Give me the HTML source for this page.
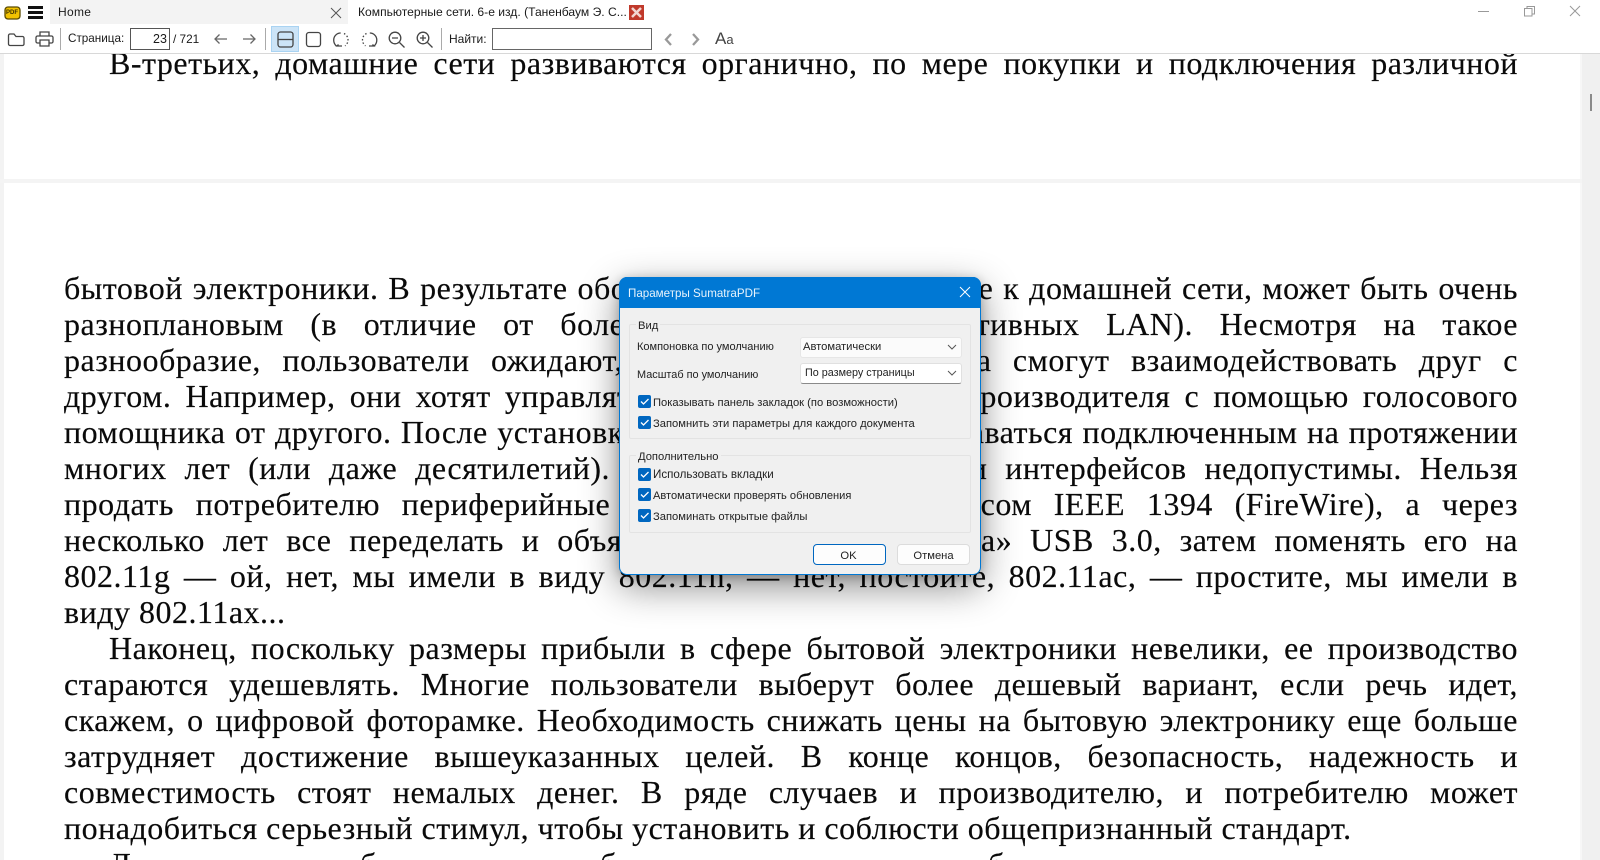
<!DOCTYPE html>
<html lang="ru"><head><meta charset="utf-8"><title>SumatraPDF</title>
<style>
html,body{margin:0;padding:0;width:1600px;height:860px;overflow:hidden;background:#fff}
body{position:relative;font-family:"Liberation Sans",sans-serif;color:#111}
.a{position:absolute;white-space:nowrap}
.bg{position:absolute}
.l{position:absolute;left:64px;width:1454px;height:36px;line-height:36px;font-family:"Liberation Serif",serif;font-size:32px;letter-spacing:.5px;color:#0a0a0a;text-align:justify;text-align-last:justify;white-space:nowrap;-webkit-text-stroke:.15px #0a0a0a}
.i{left:109px;width:1409px}
.e{text-align-last:left;text-align:left}
.t{font-size:12px;line-height:16px;color:#1a1a1a}
.d{font-size:11.2px;line-height:14px;color:#222}
.cb{position:absolute;width:13px;height:13px;background:#0067c0;border-radius:2px}
.cb svg{display:block}
</style></head><body>
<div class="bg" style="left:0;top:0;width:4px;height:860px;background:#f3f3f3"></div>
<div class="bg" style="left:1582px;top:0;width:18px;height:860px;background:#f0f0f0"></div>
<div class="bg" style="left:1580px;top:0;width:2px;height:860px;background:#f7f7f7"></div>
<div class="bg" style="left:0;top:179px;width:1582px;height:4px;background:#f4f4f4"></div>
<div class="bg" style="left:1590px;top:94px;width:2px;height:17px;background:#8a8a8a"></div>

<div class="l" style="top:45px;left:109px;width:1409px">В-третьих, домашние сети развиваются органично, по мере покупки и подключения различной</div>
<div class="l" style="top:270px">бытовой электроники. В результате оборудование, подключаемое к домашней сети, может быть очень</div>
<div class="l" style="top:306px">разноплановым (в отличие от более однородных корпоративных LAN). Несмотря на такое</div>
<div class="l" style="top:342px">разнообразие, пользователи ожидают, что все их устройства смогут взаимодействовать друг с</div>
<div class="l" style="top:378px">другом. Например, они хотят управлять устройством одного производителя с помощью голосового</div>
<div class="l" style="top:414px">помощника от другого. После установки устройств должны оставаться подключенным на протяжении</div>
<div class="l" style="top:450px">многих лет (или даже десятилетий). Частые смены версий и интерфейсов недопустимы. Нельзя</div>
<div class="l" style="top:486px">продать потребителю периферийные устройства с интерфейсом IEEE 1394 (FireWire), а через</div>
<div class="l" style="top:522px">несколько лет все переделать и объявить «стандартом месяца» USB 3.0, затем поменять его на</div>
<div class="l" style="top:558px">802.11g — ой, нет, мы имели в виду 802.11n, — нет, постойте, 802.11ac, — простите, мы имели в</div>
<div class="l e" style="top:594px">виду 802.11ax...</div>
<div class="l i" style="top:630px">Наконец, поскольку размеры прибыли в сфере бытовой электроники невелики, ее производство</div>
<div class="l" style="top:666px">стараются удешевлять. Многие пользователи выберут более дешевый вариант, если речь идет,</div>
<div class="l" style="top:702px">скажем, о цифровой фоторамке. Необходимость снижать цены на бытовую электронику еще больше</div>
<div class="l" style="top:738px">затрудняет достижение вышеуказанных целей. В конце концов, безопасность, надежность и</div>
<div class="l" style="top:774px">совместимость стоят немалых денег. В ряде случаев и производителю, и потребителю может</div>
<div class="l e" style="top:810px">понадобиться серьезный стимул, чтобы установить и соблюсти общепризнанный стандарт.</div>
<div class="l e" style="top:846px;left:109px">Д</div>
<div class="l e" style="top:846px;left:360px">б</div>
<div class="l e" style="top:846px;left:600px">б</div>
<div class="l e" style="top:846px;left:988px">б</div>

<!-- chrome -->
<div class="bg" style="left:0;top:0;width:1600px;height:53px;background:#fff;border-bottom:1px solid #d8d8d8"></div>
<div class="bg" style="left:50px;top:0;width:298px;height:24px;background:#f3f3f3"></div>
<svg class="a" style="left:0;top:0" width="1600" height="53" viewBox="0 0 1600 53" fill="none" stroke="#444" stroke-width="1.3">
  <rect x="5" y="7" width="15" height="12" rx="3" fill="#f2c200" stroke="#5a4a00"/>
  <g fill="#111" stroke="none"><rect x="28" y="6" width="15" height="3"/><rect x="28" y="11" width="15" height="3"/><rect x="28" y="16" width="15" height="3"/></g>
  <path d="M331 8l10 10M341 8l-10 10" stroke="#555" stroke-width="1"/>
  <path d="M8.500 35.500a1.500 1.500 0 0 1 1.500-1.500h4l2 2.500h6.500a1.500 1.500 0 0 1 1.500 1.500v6a1.500 1.500 0 0 1-1.500 1.500h-12.500a1.500 1.500 0 0 1-1.500-1.500z"/>
  <path d="M40 36v-4h9v4M40 43h-2.500a1.500 1.500 0 0 1-1.500-1.500v-4a1.500 1.500 0 0 1 1.500-1.500h14a1.500 1.500 0 0 1 1.500 1.500v4a1.500 1.500 0 0 1-1.500 1.500h-2.500M40 40h9v6h-9z"/>
  <path d="M60.500 28v22M265.500 28v22M441.500 28v22" stroke="#aaa" stroke-width="1"/>
  <path d="M227 39h-12M219.500 34.500l-4.500 4.500 4.500 4.500M243 39h12M250.500 34.500l4.500 4.500-4.500 4.500" stroke="#666"/>
  <rect x="271.500" y="26.500" width="27" height="25" fill="#cce4f7" stroke="#a9d3f2" stroke-width="1"/>
  <rect x="278" y="32" width="15" height="15" rx="2.500"/><path d="M278 39.500h15"/>
  <rect x="306.500" y="32.500" width="14" height="14" rx="2.500"/>
  <g transform="translate(2 0)">
  <path d="M340 46h-5l1.500-1.500M334.500 46c-2-1.500-2.800-3.500-2.800-6a7 7 0 0 1 7-7"/>
  <path d="M342 33.500a7 7 0 0 1 4 6.500 7 7 0 0 1-3 5.800" stroke-dasharray="1.500 2"/>
  </g>
  <g transform="translate(-2 0)">
  <path d="M371 46h5l-1.500-1.500M376 46c2-1.500 2.800-3.500 2.800-6a7 7 0 0 0-7-7"/>
  <path d="M368.500 33.500a7 7 0 0 0-4 6.500 7 7 0 0 0 3 5.800" stroke-dasharray="1.500 2"/>
  </g>
  <circle cx="395" cy="38" r="5.800"/><path d="M392 38h6M399.500 42.500l5 5"/>
  <circle cx="423" cy="38" r="5.800"/><path d="M420 38h6M423 35v6M427.500 42.500l5 5"/>
  <path d="M671 34l-5 5.500 5 5.500" stroke="#999" stroke-width="2.300"/>
  <path d="M693 34l5 5.500-5 5.500" stroke="#999" stroke-width="2.300"/>
  <path d="M1478 11.500h11" stroke="#999" stroke-width="1"/>
  <path d="M1524.500 8.500h7.500v7.500h-7.500zM1527 8.500v-2h7.500v7.500h-2.500" stroke="#999" stroke-width="1"/>
  <path d="M1570 6l10 10M1580 6l-10 10" stroke="#999" stroke-width="1"/>
</svg>
<div class="a" style="left:6px;top:9px;font:bold 6px 'Liberation Sans',sans-serif;color:#3a2f00;line-height:8px">PDF</div>
<div class="a t" style="left:58px;top:4px;letter-spacing:.3px">Home</div>
<div class="a t" style="left:358px;top:4px;font-size:12.1px">Компьютерные сети. 6-е изд. (Таненбаум Э. С...</div>
<svg class="a" style="left:629px;top:5px" width="15" height="15" fill="none"><rect width="15" height="15" fill="#c0392b"/><path d="M3 3l9 9M12 3l-9 9" stroke="#f2d6d2" stroke-width="2.500"/></svg>
<div class="a t" style="left:68px;top:31px;font-size:11.7px">Страница:</div>
<div class="a" style="left:130px;top:28px;width:38px;height:20px;border:1px solid #555;background:#fff"></div>
<div class="a t" style="left:153px;top:31px;font-size:12.5px">23</div>
<div class="a t" style="left:173px;top:31px;font-size:11.8px">/ 721</div>
<div class="a t" style="left:449px;top:31px">Найти:</div>
<div class="a" style="left:492px;top:28px;width:158px;height:20px;border:1px solid #666;background:#fff"></div>
<div class="a" style="left:715px;top:29px;font-size:17px;line-height:20px;color:#444">A<span style="font-size:13px">a</span></div>

<!-- dialog -->
<div class="bg" style="left:619px;top:277px;width:360px;height:296px;background:#f0f0f0;border:1px solid #0078d4;border-radius:8px;box-shadow:0 12px 38px rgba(0,0,0,.45),0 2px 10px rgba(0,0,0,.22)"></div>
<div class="bg" style="left:619px;top:277px;width:362px;height:31px;background:#0078d4;border-radius:8px 8px 0 0"></div>
<div class="a" style="left:628px;top:286px;font-size:11.6px;line-height:16px;color:#e8f3fc">Параметры SumatraPDF</div>
<svg class="a" style="left:959px;top:286px" width="12" height="12" fill="none" stroke="#fff" stroke-width="1"><path d="M1 1l10 10M11 1l-10 10"/></svg>

<div class="bg" style="left:629px;top:324px;width:340px;height:113px;border:1px solid #e3e3e3;border-radius:2px"></div>
<div class="a d" style="left:636px;top:319px;background:#f0f0f0;padding:0 2px">Вид</div>
<div class="a d" style="left:637px;top:340px;font-size:11px">Компоновка по умолчанию</div>
<div class="a d" style="left:637px;top:368px;font-size:10.9px">Масштаб по умолчанию</div>
<div class="bg" style="left:800px;top:337px;width:160px;height:19px;background:#fbfbfb;border:1px solid #e6e6e6;border-radius:3px"></div>
<div class="bg" style="left:800px;top:363px;width:160px;height:19px;background:#fff;border:1px solid #e0e0e0;border-bottom-color:#8a8a8a;border-radius:3px"></div>
<div class="a d" style="left:803px;top:340px">Автоматически</div>
<div class="a d" style="left:805px;top:366px;font-size:10.8px">По размеру страницы</div>
<svg class="a" style="left:947px;top:343px" width="10" height="36" fill="none" stroke="#555" stroke-width="1"><path d="M1 2l4 4 4-4M1 28l4 4 4-4"/></svg>

<div class="cb" style="left:638px;top:395px"><svg width="13" height="13" fill="none" stroke="#fff" stroke-width="1.300"><path d="M3 6.500l2.500 2.500 5-5"/></svg></div>
<div class="a d" style="left:653px;top:396px">Показывать панель закладок (по возможности)</div>
<div class="cb" style="left:638px;top:416px"><svg width="13" height="13" fill="none" stroke="#fff" stroke-width="1.300"><path d="M3 6.500l2.500 2.500 5-5"/></svg></div>
<div class="a d" style="left:653px;top:417px">Запомнить эти параметры для каждого документа</div>

<div class="bg" style="left:629px;top:455px;width:340px;height:76px;border:1px solid #e3e3e3;border-radius:2px"></div>
<div class="a d" style="left:636px;top:450px;background:#f0f0f0;padding:0 2px">Дополнительно</div>
<div class="cb" style="left:638px;top:468px"><svg width="13" height="13" fill="none" stroke="#fff" stroke-width="1.300"><path d="M3 6.500l2.500 2.500 5-5"/></svg></div>
<div class="a d" style="left:653px;top:468px;font-size:11.6px">Использовать вкладки</div>
<div class="cb" style="left:638px;top:488px"><svg width="13" height="13" fill="none" stroke="#fff" stroke-width="1.300"><path d="M3 6.500l2.500 2.500 5-5"/></svg></div>
<div class="a d" style="left:653px;top:489px;font-size:11.1px">Автоматически проверять обновления</div>
<div class="cb" style="left:638px;top:509px"><svg width="13" height="13" fill="none" stroke="#fff" stroke-width="1.300"><path d="M3 6.500l2.500 2.500 5-5"/></svg></div>
<div class="a d" style="left:653px;top:510px">Запоминать открытые файлы</div>

<div class="bg" style="left:813px;top:544px;width:71px;height:19px;background:#fdfdfd;border:1px solid #0067c0;border-radius:4px"></div>
<div class="bg" style="left:897px;top:544px;width:71px;height:19px;background:#fdfdfd;border:1px solid #dcdcdc;border-radius:4px"></div>
<div class="a d" style="left:812px;width:73px;text-align:center;top:549px">OK</div>
<div class="a d" style="left:897px;width:73px;text-align:center;top:549px">Отмена</div>
</body></html>
